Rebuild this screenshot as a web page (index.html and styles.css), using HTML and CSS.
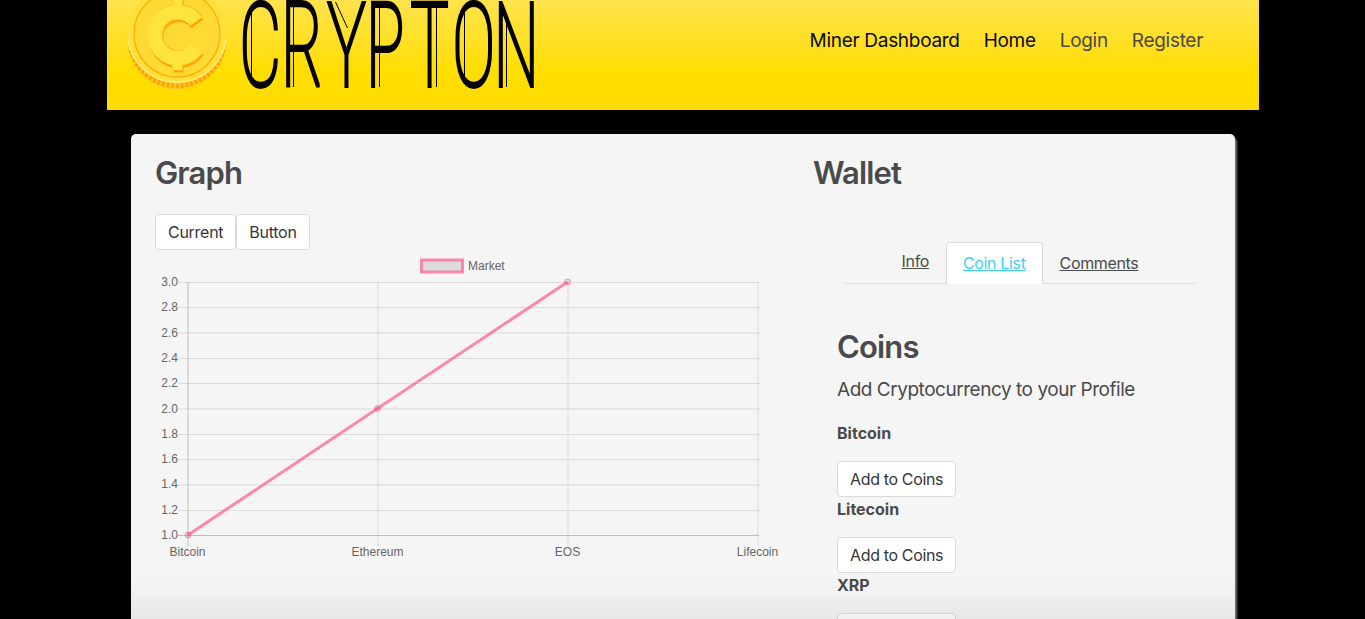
FILE: index.html
```
<!DOCTYPE html>
<html lang="en">
<head>
<meta charset="utf-8">
<title>Crypton</title>
<link rel="stylesheet" href="styles.css">
</head>
<body>
<header class="navbar">
  <svg class="logo" width="430" height="110" viewBox="0 0 430 110" role="img" aria-label="Crypton">
    <ellipse cx="70" cy="39.500" rx="49.500" ry="49.500" fill="#ffc61c"/>
    <path d="M24.500 50 A47 47 0 0 0 115.500 50" fill="none" stroke="#ff9f0a" stroke-width="6" stroke-dasharray="2.500 2.200"/>
    <circle cx="70" cy="33.500" r="49.500" fill="#ffdf3b"/>
    <path d="M21 40 A49.500 49.500 0 0 0 119 40" fill="none" stroke="#fff08c" stroke-width="1.300"/>
    <circle cx="70" cy="34" r="43" fill="#ffda35" stroke="#ffb000" stroke-width="1.400"/>
    <g fill="none" stroke="#ffa200" stroke-width="15" transform="translate(1.200 2.500)">
      <path d="M89.100 21.500 A23 23 0 1 0 89.100 48.500"/>
      <path d="M70.500 -8V12M70.500 57V70" stroke-width="10"/>
    </g>
    <g fill="none" stroke="#ffbe18" stroke-width="16">
      <path d="M89.500 21 A23 23 0 1 0 89.500 49"/>
      <path d="M70.500 -8V12M70.500 57V70.500" stroke-width="11"/>
    </g>
    <g fill="none" stroke="#ffe440" stroke-width="14.500">
      <path d="M89.100 21.500 A23 23 0 1 0 89.100 48.500"/>
      <path d="M70.500 -8V12M70.500 57V70" stroke-width="9.500"/>
    </g>
    <g transform="translate(0 85.500) scale(.55 1)">
      <text class="wordmark" x="241 317 401 471 552 628 703">CRYPTON</text>
    </g>
    <path d="M144.500 10V80M186.500 5V87M228.500 2L240.500 28M272.500 5V87M329.500 5V87M357.500 10V80M399.500 14V87" fill="none" stroke="#000" stroke-width="1"/>
  </svg>
  <nav class="menu">
    <a class="strong">Miner Dashboard</a>
    <a class="strong">Home</a>
    <a>Login</a>
    <a>Register</a>
  </nav>
</header>
<main class="box">
  <section class="graph">
    <h1 class="title">Graph</h1>
    <div class="buttons"><button class="button">Current</button><button class="button">Button</button></div>
    <svg class="chart" width="640" height="312" viewBox="155 250 640 312">
      <g stroke="#000" stroke-opacity=".1">
        <path d="M178 282.500H759M178 307.500H759M178 333H759M178 358.500H759M178 383.500H759M178 409H759M178 434.500H759M178 459.500H759M178 485H759M178 510.500H759"/>
        <path d="M378 282V546M568 282V546M758 282V546"/>
        <path d="M188 282V546M178 535.500H759" stroke-opacity=".22"/>
      </g>
      <rect x="421.500" y="260" width="41" height="12" fill="#000" fill-opacity=".1"/>
      <rect x="421.500" y="260" width="41" height="12" fill="none" stroke="#ff6395" stroke-opacity=".75" stroke-width="3"/>
      <path d="M188 535L377.500 408.500L567.500 282" fill="none" stroke="#ff6395" stroke-opacity=".75" stroke-width="3"/>
      <g fill="#000" fill-opacity=".1" stroke="#ff6395" stroke-opacity=".7">
        <circle cx="188" cy="535" r="3"/><circle cx="377.500" cy="408.500" r="3"/><circle cx="567.500" cy="282" r="3"/>
      </g>
      <g class="axis">
        <text x="468" y="270">Market</text>
        <g text-anchor="end">
          <text x="178" y="286">3.0</text><text x="178" y="311">2.8</text><text x="178" y="337">2.6</text><text x="178" y="362">2.4</text><text x="178" y="387">2.2</text><text x="178" y="413">2.0</text><text x="178" y="438">1.8</text><text x="178" y="463">1.6</text><text x="178" y="488">1.4</text><text x="178" y="514">1.2</text><text x="178" y="539">1.0</text>
        </g>
        <g text-anchor="middle">
          <text x="187.500" y="556">Bitcoin</text><text x="377.500" y="556">Ethereum</text><text x="567.500" y="556">EOS</text><text x="757.500" y="556">Lifecoin</text>
        </g>
      </g>
    </svg>
  </section>
  <section class="wallet">
    <h1 class="title">Wallet</h1>
    <div class="tabs"><a class="tab info">Info</a><a class="tab active">Coin List</a><a class="tab">Comments</a></div>
    <div class="coins">
      <h2 class="title">Coins</h2>
      <p class="subtitle">Add Cryptocurrency to your Profile</p>
      <div class="coin"><strong>Bitcoin</strong><button class="button">Add to Coins</button></div>
      <div class="coin"><strong>Litecoin</strong><button class="button">Add to Coins</button></div>
      <div class="coin"><strong>XRP</strong><button class="button">Add to Coins</button></div>
    </div>
  </section>
</main>
<div class="fade"></div>
</body>
</html>
```
FILE: styles.css
```
* { box-sizing: border-box; }
html, body { height: 619px; overflow: hidden; }
body { margin: 0; background: #000; color: #4a4a4a; font: 16px/24px Inter, "Liberation Sans", sans-serif; letter-spacing: -0.35px; }
.navbar { width: 1152px; height: 110px; margin-left: 107px; padding-right: 56px; display: flex; justify-content: space-between; background: linear-gradient(#ffe34d 0, #ffdf1c 45%, #ffde00 65%, #ffdc00); }
.logo { display: block; }
.wordmark { font: 100 116px Roboto, sans-serif; letter-spacing: 0; fill: #000; stroke: #000; stroke-width: 3.4px; vector-effect: non-scaling-stroke; }
.menu { display: flex; gap: 24px; height: 81px; align-items: center; font-size: 19px; letter-spacing: -0.3px; white-space: nowrap; }
.menu .strong { color: #0a0a0a; }
.box { width: 1104px; height: 700px; margin: 24px 0 0 131px; padding: 21px 24px; display: flex; background: #f5f5f5; border-radius: 5px; box-shadow: 2px 3px 2px #777; }
.graph { width: 658px; }
.title { margin: 0; font-size: 31px; line-height: 36px; font-weight: 600; letter-spacing: -0.85px; }
.buttons { display: flex; margin-top: 23px; }
.button { height: 36px; padding: 0 12px; border: 1px solid #dbdbdb; border-radius: 4px; background: #fff; color: #363636; font: inherit; letter-spacing: inherit; white-space: nowrap; }
.buttons .button { letter-spacing: -0.27px; }
.chart { display: block; }
.axis { font: 12px "Liberation Sans", sans-serif; letter-spacing: 0; fill: #666; }
.wallet { width: 398px; }
.tabs { display: flex; justify-content: center; width: 350px; height: 42px; margin: 51px 0 0 32px; border-bottom: 1px solid #dbdbdb; }
.tab { height: 42px; padding: 9px 17px 0; text-decoration: underline; white-space: nowrap; }
.info { padding-top: 7px; }
.active { padding: 8px 16px 0; border: 1px solid #dbdbdb; border-bottom: 0; border-radius: 4px 4px 0 0; background: #fff; color: #3fd2f2; }
.coins { margin: 45px 0 0 24px; }
.subtitle { margin: 12px 0 19px; font-size: 19px; line-height: 25px; letter-spacing: -0.47px; white-space: nowrap; }
.coin { height: 76px; display: flex; flex-direction: column; align-items: flex-start; gap: 16px; }
.coin strong { font-weight: 700; letter-spacing: 0; }
.fade { position: absolute; left: 0; right: 0; top: 574px; height: 45px; background: linear-gradient(transparent, rgba(0,0,0,.015) 40%, rgba(0,0,0,.06)); pointer-events: none; }
```
